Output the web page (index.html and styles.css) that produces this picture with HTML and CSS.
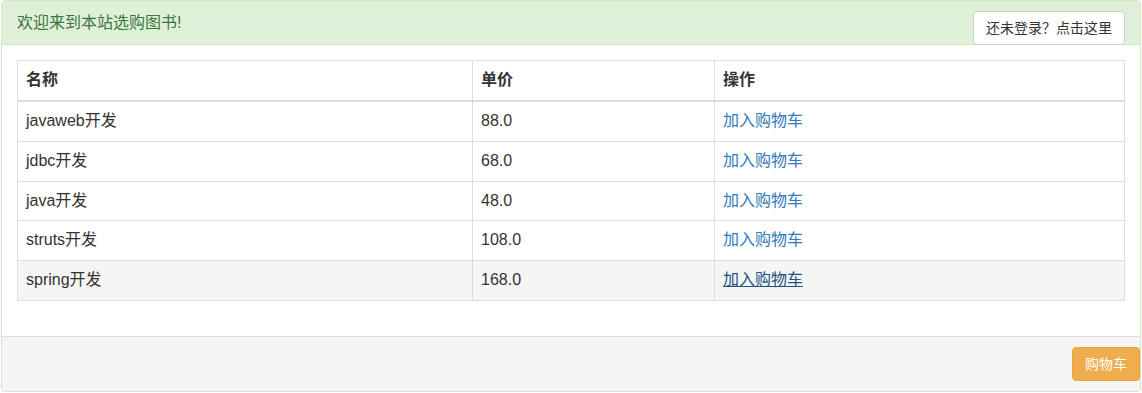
FILE: index.html
```html
<!DOCTYPE html>
<html lang="zh-CN">
<head>
    <meta charset="UTF-8">
    <meta name="viewport" content="width=device-width, initial-scale=1.0">
    <title>图书选购</title>
    <link rel="stylesheet" href="styles.css">
</head>
<body>
    <div class="wrap">
        <div class="panel">
            <div class="panel-heading">
                <h3 class="panel-title">欢迎来到本站选购图书!</h3>
                <a class="btn btn-default" href="#">还未登录？点击这里</a>
            </div>
            <div class="panel-body">
                <table class="book-table">
                    <thead>
                        <tr>
                            <th class="col-name">名称</th>
                            <th class="col-price">单价</th>
                            <th class="col-op">操作</th>
                        </tr>
                    </thead>
                    <tbody>
                        <tr><td>javaweb开发</td><td>88.0</td><td><a href="#">加入购物车</a></td></tr>
                        <tr><td>jdbc开发</td><td>68.0</td><td><a href="#">加入购物车</a></td></tr>
                        <tr><td>java开发</td><td>48.0</td><td><a href="#">加入购物车</a></td></tr>
                        <tr><td>struts开发</td><td>108.0</td><td><a href="#">加入购物车</a></td></tr>
                        <tr class="hovered"><td>spring开发</td><td>168.0</td><td><a href="#">加入购物车</a></td></tr>
                    </tbody>
                </table>
            </div>
            <div class="panel-footer">
                <a class="btn btn-warning" href="#">购物车</a>
            </div>
        </div>
    </div>
</body>
</html>
```

FILE: styles.css
```css
* {
    box-sizing: border-box;
}
body {
    margin: 0;
    font-family: "Liberation Sans", "Noto Sans CJK SC", sans-serif;
    font-size: 16px;
    line-height: 1.42857;
    color: #333;
    background-color: #fff;
}
.wrap {
    padding: 0 1px;
}
.panel {
    width: 1140px;
    border: 1px solid #d6e9c6;
    border-radius: 4px;
    background-color: #fff;
    overflow: hidden;
}
.panel-heading {
    display: flex;
    justify-content: space-between;
    align-items: flex-start;
    height: 44px;
    padding: 10px 15px 0 15px;
    background-color: #dff0d8;
    border-bottom: 1px solid #d6e9c6;
    color: #3c763d;
}
.panel-title {
    margin: 0;
    font-size: 16px;
    font-weight: normal;
    line-height: 23px;
}
.btn {
    display: inline-block;
    padding: 6px 12px;
    font-size: 14px;
    line-height: 20px;
    border: 1px solid transparent;
    border-radius: 4px;
    text-decoration: none;
    white-space: nowrap;
    position: relative;
}
.btn-default {
    color: #333;
    background-color: #fff;
    border-color: #ccc;
}
.btn-warning {
    color: #fff;
    background-color: #f0ad4e;
    border-color: #eea236;
}
.panel-body {
    padding: 15px;
}
.book-table {
    width: 100%;
    table-layout: fixed;
    border-collapse: collapse;
    margin-bottom: 20px;
    border: 1px solid #ddd;
}
.book-table th,
.book-table td {
    padding: 8px;
    text-align: left;
    border: 1px solid #ddd;
    line-height: 1.42857;
    vertical-align: top;
}
.book-table th {
    font-weight: bold;
    border-bottom-width: 2px;
}
.col-name {
    width: 455px;
}
.col-price {
    width: 242px;
}
.book-table a {
    color: #337ab7;
    text-decoration: none;
}
.book-table tr.hovered {
    background-color: #f5f5f5;
}
.book-table tr.hovered a {
    color: #23527c;
    text-decoration: underline;
}
.panel-footer {
    display: flex;
    justify-content: flex-end;
    padding: 10px 0 10px 15px;
    background-color: #f5f5f5;
    border-top: 1px solid #ddd;
}
```
